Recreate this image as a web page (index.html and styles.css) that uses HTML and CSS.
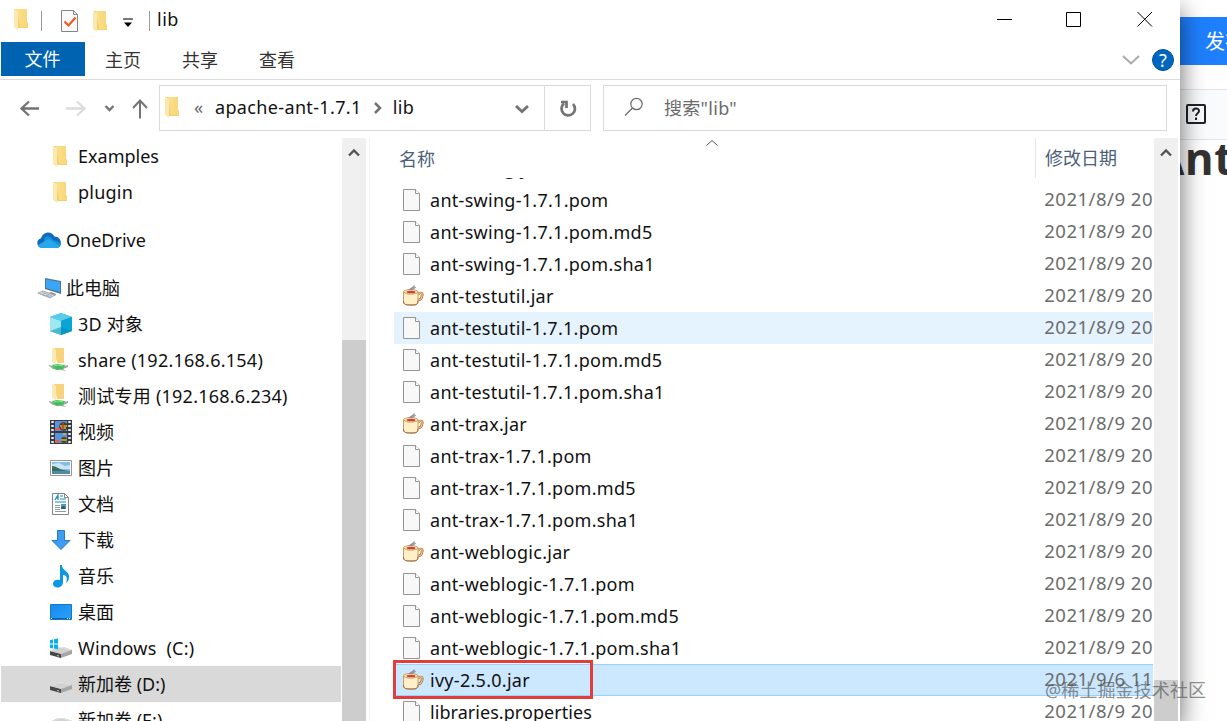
FILE: index.html
```html
<!DOCTYPE html>
<html lang="zh-CN">
<head>
    <meta charset="UTF-8">
    <meta name="viewport" content="width=device-width, initial-scale=1.0">
    <title>lib</title>
    <link rel="stylesheet" href="styles.css">
</head>
<body>
    <svg class="sprite" width="0" height="0">
        <defs>
            <linearGradient id="gold" x1="0" x2="1"><stop offset="0" stop-color="#fbe08c"/><stop offset="1" stop-color="#f8d678"/></linearGradient>
            <linearGradient id="sky" x1="0" y1="0" x2="1" y2="1"><stop offset="0" stop-color="#1689ee"/><stop offset="1" stop-color="#2ba2fb"/></linearGradient>
        </defs>
        <symbol id="folder" viewBox="0 0 24 24">
            <path d="M5 2h12v13l1 2v4H8z" fill="#f5cf68"/>
            <path d="M7 2h10v13l1 1v4h-8z" fill="url(#gold)"/>
            <path d="M4 2l4 2v19l-4-3z" fill="#fbe9b2"/>
        </symbol>
        <symbol id="file" viewBox="0 0 24 24">
            <path d="M3.500 1.500h12l4 4v17h-16z" fill="#f8f8f8" stroke="#949494"/>
            <path d="M15.500 1.500v4h4" fill="#fff" stroke="#949494"/>
        </symbol>
        <symbol id="jar" viewBox="0 0 24 24">
            <path d="M18 10c3-2 5-1 4 2-.5 3-2 4-4 4" fill="none" stroke="#a86b35" stroke-width="2.600"/>
            <path d="M18 10c3-2 5-1 4 2-.5 3-2 4-4 4" fill="none" stroke="#f7c98f" stroke-width="1.200"/>
            <path d="M3.500 8v9c0 4 3 4 7.500 4s7 0 7-4V8z" fill="#fff0c9" stroke="#cf9c5c"/>
            <path d="M3.500 17c0 4 3 4 7.500 4s7 0 7-4" fill="none" stroke="#94683d"/>
            <ellipse cx="10.700" cy="7.800" rx="7.200" ry="2.300" fill="#fbe7bd" stroke="#b58a50" stroke-width=".8"/>
            <ellipse cx="11" cy="8" rx="4.500" ry="1.300" fill="#d4452c"/>
            <path d="M9.500 6c1-3 3.500-1 5-4.500M11 6c2-2 3.500-1 4.500-3" fill="none" stroke="#858a92" stroke-width="1.200"/>
        </symbol>
        <symbol id="cloud" viewBox="0 0 24 24">
            <path d="M5 20a5 5 0 0 1-1-9.800C6 4 14 2 17.500 8.500c8 0 8.500 11.500 1 11.500z" fill="#0f6cbd"/>
            <path d="M8 9c3-2 6 0 8 3l8 3c0 4-3 5-5.500 5H5z" fill="#1490df"/>
            <path d="M1 17l11-6 11 7c-1 2-3 2-5 2H5c-2 0-3-1-4-3z" fill="#28a8ea"/>
        </symbol>
        <symbol id="pc" viewBox="0 0 24 24">
            <path d="M8 2l16 3v13L8 13z" fill="#527590"/>
            <path d="M9 3.500l14 2.500v10L9 12z" fill="#3ba5f7"/>
            <path d="M14 16l5 2-1 2-7-2z" fill="#7c8b95"/>
            <path d="M1 17l5-2 12 4-5 3z" fill="#d9dde0" stroke="#929ca3" stroke-width=".8"/>
            <path d="M3 18l11 3M5 16l10 4M5 19l4-2M9 20l4-2" stroke="#9da5aa" stroke-width=".7"/>
        </symbol>
        <symbol id="cube" viewBox="0 0 24 24">
            <path d="M12 1l11 4v14l-11 4-11-4V5z" fill="#12a5cd"/>
            <path d="M1 5l11-4 11 4-11 4z" fill="#58cce9"/>
            <path d="M1 5l11 4v14L1 19z" fill="#9ee8f2"/>
            <path d="M12 9v14l11-4V5z" fill="#08a5d5"/>
            <path d="M1 19l11-4v8zM23 19l-11-4v8z" fill="#0b8eb5" opacity=".55"/>
        </symbol>
        <symbol id="share" viewBox="0 0 24 24">
            <path d="M5 0h10v15H8z" fill="#f8d37c"/>
            <path d="M3 0l4 2v14l-4-2z" fill="#fdeab2"/>
            <path d="M0 17l4 1h11l4-1v2l-5 2 3 2-5-1-8-1-4-3z" fill="#9fa9a4"/>
            <path d="M3 17l5-1 8 1-2 4-7 1z" fill="#42bf59"/>
            <path d="M5 18l4-1 5 1" stroke="#8ce698" fill="none"/>
        </symbol>
        <symbol id="video" viewBox="0 0 24 24">
            <path d="M1 0h22v24H1z" fill="#353b43"/>
            <path d="M6 1h12v10H6zM6 13h12v10H6z" fill="#5b91dd"/>
            <circle cx="14.500" cy="6.500" r="4.300" fill="#413e25"/>
            <path d="M11 6h7M12 8h5" stroke="#d6b92e" stroke-width="1.500"/>
            <path d="M14 3v7" stroke="#c03c2d" stroke-width="1.500"/>
            <path d="M6 8h5v2H6zM6 20h4v3H6z" fill="#df6159"/>
            <circle cx="15" cy="20" r="3" fill="#484126"/>
            <path d="M12 20h6M14 14h3" stroke="#d6b92e" stroke-width="1.500"/>
            <path d="M3.500 1v22M20.500 1v22" stroke="#eee" stroke-width="2.500" stroke-dasharray="2 2"/>
        </symbol>
        <symbol id="picture" viewBox="0 0 24 24">
            <path d="M1.500 4.500h21v15h-21z" fill="#fff" stroke="#969696"/>
            <path d="M3 6h18v12H3z" fill="#83bdec"/>
            <path d="M3 8l7-1 6 3 5-1v4H3z" fill="#c7e5f7"/>
            <path d="M3 10c4 0 7 3 11 4l7 1v1H3z" fill="#39705c"/>
            <path d="M3 15h18v3H3z" fill="#518aa5"/>
        </symbol>
        <symbol id="document" viewBox="0 0 24 24">
            <path d="M3.500 1.500h12l4 4v17h-16z" fill="#fff" stroke="#858585"/>
            <path d="M15.500 1.500v4h4" fill="none" stroke="#858585"/>
            <path d="M6 8l3-5v5M7 6h2M11 4h3M11 7h6M6 10h11" fill="none" stroke="#168cc5" stroke-width="1.200"/>
            <path d="M6 13.500h5M6 15.500h5M6 17.500h5M6 19.500h11" stroke="#8c999e"/>
            <path d="M12 12h5v5h-5z" fill="#4a9ac7"/><path d="M12 15l3-1 2 3h-5z" fill="#315e64"/>
        </symbol>
        <symbol id="download" viewBox="0 0 24 24">
            <path d="M8.500 2.500h7v10H21l-9 9-9-9h5.500z" fill="#3d9df2" stroke="#287ac8"/>
        </symbol>
        <symbol id="music" viewBox="0 0 24 24">
            <path d="M11 1h2c0 6 8 6 7 13-.4 3-2 4-3 5 2-6 0-8-3-8v7c0 7-10 7-10 2 0-4 4-5 7-4z" fill="#0b98e5"/>
        </symbol>
        <symbol id="desktop" viewBox="0 0 24 24">
            <path d="M1.500 4.500h21v15h-21z" fill="url(#sky)" stroke="#147bc8"/>
            <path d="M2 18.500h20" stroke="#0864a4"/><path d="M2 18.500h1M18 18.500h1M20 18.500h1" stroke="#fff"/>
        </symbol>
        <symbol id="drive" viewBox="0 0 24 24">
            <path d="M1 14l8-4h5l9 3v4l-11 4L1 17z" fill="#a6a6a6"/>
            <path d="M1 14l11 3v4L1 18z" fill="#484848"/>
            <path d="M1 14l8-4h5l9 3-11 4z" fill="#d2d2d2"/>
            <path d="M2 14l7-3.500h5l8 2.500" fill="none" stroke="#e8e8e8" stroke-width=".8"/>
            <path d="M8 18.500l2 .5" stroke="#b8c9b5"/>
        </symbol>
        <symbol id="windrive" viewBox="0 0 24 24">
            <use href="#drive" y="1"/>
            <path d="M1 4l3-.5v4H1zM5 3.300l4-.8v5H5zM1 8.500h3v4L1 12zM5 8.500h4v4.800l-4-.8z" fill="#00b3ed"/>
        </symbol>
    </svg>

    <div class="desktop">
        <div class="explorer">
            <div class="titlebar">
                <svg class="icon"><use href="#folder"/></svg>
                <span class="sep"></span>
                <svg class="title-check" width="20" height="22" viewBox="0 0 20 22">
                    <path d="M1.500.5h12l4 4v17h-16z" fill="#fafafa" stroke="#858585"/>
                    <path d="M13.500.5v4h4" fill="none" stroke="#858585"/>
                    <path d="M4.500 11.500l4 4 7-8" fill="none" stroke="#f05a22" stroke-width="2.200"/>
                </svg>
                <svg class="icon quick-folder"><use href="#folder"/></svg>
                <svg class="title-more" width="10" height="10" viewBox="0 0 10 10"><path d="M0 1h10" stroke="#222" stroke-width="1.200"/><path d="M1 4.500h8l-4 4.500z" fill="#000"/></svg>
                <span class="sep last-sep"></span>
                <span class="title">lib</span>
                <div class="controls">
                    <svg width="16" height="16" viewBox="0 0 16 16"><path d="M0 8.500h15"/></svg>
                    <svg width="16" height="16" viewBox="0 0 16 16"><path d="M.5 1.500h14v14H.5z"/></svg>
                    <svg width="16" height="16" viewBox="0 0 16 16"><path d="M.5 1l14.500 14.500M15 1L.5 15.500"/></svg>
                </div>
            </div>

            <div class="tabs">
                <span class="tab active">文件</span>
                <span class="tab">主页</span>
                <span class="tab">共享</span>
                <span class="tab">查看</span>
                <div class="ribbon-tools">
                    <svg width="18" height="10" viewBox="0 0 18 10"><path d="M1 1l8 7.500L17 1" fill="none" stroke="#a9a9a9" stroke-width="2"/></svg>
                    <span class="help">?</span>
                </div>
            </div>

            <div class="navbar">
                <svg class="arrows" width="158" height="48" viewBox="0 0 158 48" fill="none" stroke="#737373" stroke-width="2.300">
                    <path d="M39 28.500H22M29 21.500l-7.500 7 7.500 7"/>
                    <path d="M66 28.500h18M77 21.500l7.500 7-7.500 7" stroke="#dcdcdc"/>
                    <path d="M105.500 26l4 4 4-4"/>
                    <path d="M140 38.500V21M133 28l7-7.500 7 7.500" stroke-width="2"/>
                </svg>
                <div class="address">
                    <svg class="icon"><use href="#folder"/></svg>
                    <span class="crumb-more">«</span>
                    <span class="crumb">apache-ant-1.7.1</span>
                    <svg class="crumb-arrow" width="8" height="12" viewBox="0 0 8 12"><path d="M1 1l5 5-5 5" fill="none" stroke="#737373" stroke-width="2.500"/></svg>
                    <span class="crumb">lib</span>
                    <svg class="drop" width="14" height="10" viewBox="0 0 14 10"><path d="M1 2l6 5.500L13 2" fill="none" stroke="#737373" stroke-width="2.800"/></svg>
                    <span class="refresh">
                        <svg width="20" height="20" viewBox="0 0 20 20" fill="none" stroke="#737373" stroke-width="2.700"><path d="M15 6a6.700 6.700 0 1 1-9-.5M3 4h5.500V10"/></svg>
                    </span>
                </div>
                <div class="search">
                    <svg width="20" height="20" viewBox="0 0 20 20" fill="none" stroke="#6b6b6b" stroke-width="1.200"><circle cx="12.500" cy="7" r="5.700"/><path d="M8.500 11L1 18.500"/></svg>
                    <span>搜索"lib"</span>
                </div>
            </div>

            <div class="content">
                <div class="sidebar">
                    <div class="node"><svg class="icon"><use href="#folder"/></svg>Examples</div>
                    <div class="node wide"><svg class="icon"><use href="#folder"/></svg>plugin</div>
                    <div class="node root"><svg class="icon"><use href="#cloud"/></svg>OneDrive</div>
                    <div class="node root zh"><svg class="icon"><use href="#pc"/></svg><span>此电脑</span></div>
                    <div class="node wide zh"><svg class="icon"><use href="#cube"/></svg><span>3D 对象</span></div>
                    <div class="node wide"><svg class="icon"><use href="#share"/></svg>share (192.168.6.154)</div>
                    <div class="node wide zh"><svg class="icon"><use href="#share"/></svg><span>测试专用 (192.168.6.234)</span></div>
                    <div class="node zh"><svg class="icon"><use href="#video"/></svg><span>视频</span></div>
                    <div class="node zh"><svg class="icon"><use href="#picture"/></svg><span>图片</span></div>
                    <div class="node zh"><svg class="icon"><use href="#document"/></svg><span>文档</span></div>
                    <div class="node zh"><svg class="icon"><use href="#download"/></svg><span>下载</span></div>
                    <div class="node zh"><svg class="icon"><use href="#music"/></svg><span>音乐</span></div>
                    <div class="node zh"><svg class="icon"><use href="#desktop"/></svg><span>桌面</span></div>
                    <div class="node wide"><svg class="icon"><use href="#windrive"/></svg>Windows&nbsp; (C:)</div>
                    <div class="node current zh"><svg class="icon"><use href="#drive"/></svg><span>新加卷 (D:)</span></div>
                    <div class="node zh"><svg class="icon"><use href="#drive"/></svg><span>新加卷 (E:)</span></div>
                </div>
                <div class="scrollbar side-scroll">
                    <svg width="12" height="9" viewBox="0 0 12 9"><path d="M1 7.500l5-5 5 5" fill="none" stroke="#555" stroke-width="2.400"/></svg>
                    <div class="thumb"></div>
                </div>

                <div class="files">
                    <div class="columns">
                        <span class="col-name">名称</span>
                        <svg class="sort" width="12" height="7" viewBox="0 0 12 7"><path d="M.5 6.500l5.500-5 5.500 5" fill="none" stroke="#555"/></svg>
                        <span class="col-date">修改日期</span>
                    </div>
                    <div class="rows">
                        <div class="row"><svg class="icon"><use href="#jar"/></svg><span class="name">ant-swing.jar</span><span class="date">2021/8/9 20</span></div>
                        <div class="row"><svg class="icon"><use href="#file"/></svg><span class="name">ant-swing-1.7.1.pom</span><span class="date">2021/8/9 20</span></div>
                        <div class="row"><svg class="icon"><use href="#file"/></svg><span class="name">ant-swing-1.7.1.pom.md5</span><span class="date">2021/8/9 20</span></div>
                        <div class="row"><svg class="icon"><use href="#file"/></svg><span class="name">ant-swing-1.7.1.pom.sha1</span><span class="date">2021/8/9 20</span></div>
                        <div class="row"><svg class="icon"><use href="#jar"/></svg><span class="name">ant-testutil.jar</span><span class="date">2021/8/9 20</span></div>
                        <div class="row hover"><svg class="icon"><use href="#file"/></svg><span class="name">ant-testutil-1.7.1.pom</span><span class="date">2021/8/9 20</span></div>
                        <div class="row"><svg class="icon"><use href="#file"/></svg><span class="name">ant-testutil-1.7.1.pom.md5</span><span class="date">2021/8/9 20</span></div>
                        <div class="row"><svg class="icon"><use href="#file"/></svg><span class="name">ant-testutil-1.7.1.pom.sha1</span><span class="date">2021/8/9 20</span></div>
                        <div class="row"><svg class="icon"><use href="#jar"/></svg><span class="name">ant-trax.jar</span><span class="date">2021/8/9 20</span></div>
                        <div class="row"><svg class="icon"><use href="#file"/></svg><span class="name">ant-trax-1.7.1.pom</span><span class="date">2021/8/9 20</span></div>
                        <div class="row"><svg class="icon"><use href="#file"/></svg><span class="name">ant-trax-1.7.1.pom.md5</span><span class="date">2021/8/9 20</span></div>
                        <div class="row"><svg class="icon"><use href="#file"/></svg><span class="name">ant-trax-1.7.1.pom.sha1</span><span class="date">2021/8/9 20</span></div>
                        <div class="row"><svg class="icon"><use href="#jar"/></svg><span class="name">ant-weblogic.jar</span><span class="date">2021/8/9 20</span></div>
                        <div class="row"><svg class="icon"><use href="#file"/></svg><span class="name">ant-weblogic-1.7.1.pom</span><span class="date">2021/8/9 20</span></div>
                        <div class="row"><svg class="icon"><use href="#file"/></svg><span class="name">ant-weblogic-1.7.1.pom.md5</span><span class="date">2021/8/9 20</span></div>
                        <div class="row"><svg class="icon"><use href="#file"/></svg><span class="name">ant-weblogic-1.7.1.pom.sha1</span><span class="date">2021/8/9 20</span></div>
                        <div class="row selected"><svg class="icon"><use href="#jar"/></svg><span class="name">ivy-2.5.0.jar</span><span class="date">2021/9/6 11</span><div class="mark"></div></div>
                        <div class="row"><svg class="icon"><use href="#file"/></svg><span class="name plain">libraries.properties</span><span class="date">2021/8/9 20</span></div>
                    </div>
                </div>
                <div class="scrollbar file-scroll">
                    <svg width="12" height="9" viewBox="0 0 12 9"><path d="M1 7.500l5-5 5 5" fill="none" stroke="#555" stroke-width="2.400"/></svg>
                    <div class="thumb"></div>
                </div>
            </div>
        </div>

        <div class="page">
            <div class="publish">发布</div>
            <div class="toolbar">
                <svg width="20" height="20" viewBox="0 0 20 20" fill="none" stroke="#1d2129" stroke-width="2"><rect x="1" y="1" width="18" height="18" rx="1"/><path d="M7 7.500c0-4 6-4 6-.5 0 2.500-3 2-3 5M10 13.500V16"/></svg>
            </div>
            <div class="heading">Ant</div>
        </div>
        <div class="watermark">@稀土掘金技术社区</div>
    </div>
</body>
</html>
```
FILE: styles.css
```css
* {
    box-sizing: border-box;
}

body {
    margin: 0;
    font-family: "Noto Sans", "Noto Sans CJK SC", sans-serif;
    font-size: 18px;
    color: #111;
    background-color: white;
    overflow: hidden;
}

svg {
    display: block;
    flex-shrink: 0;
}

.sprite {
    position: absolute;
}

.icon {
    width: 24px;
    height: 24px;
}

.desktop {
    position: relative;
    display: flex;
    width: 1227px;
    height: 721px;
    overflow: hidden;
}

.explorer {
    position: relative;
    z-index: 1;
    display: flex;
    flex-direction: column;
    width: 1180px;
    flex-shrink: 0;
    background-color: white;
    box-shadow: 0 10px 24px rgba(0, 0, 0, 0.6);
}

/* title bar */
.titlebar {
    display: flex;
    align-items: center;
    height: 42px;
    padding: 0 27px 5px 10px;
}

.sep {
    width: 1px;
    height: 20px;
    margin: 4px 0 0 7px;
    background-color: #9a9a9a;
}

.title-check {
    margin: 5px 0 0 18px;
}

.quick-folder {
    margin: 4px 0 0 9px;
}

.title-more {
    margin: 9px 0 0 10px;
}

.last-sep {
    margin-left: 16px;
}

.title {
    margin-left: 7px;
    letter-spacing: 0.5px;
}

.controls {
    display: flex;
    gap: 54px;
    margin-left: auto;
}

.controls svg {
    fill: none;
    stroke: #000;
    stroke-width: 1;
}

.controls svg:nth-child(2) {
    margin: 0 1px 0 -1px;
}

.tabs {
    display: flex;
    height: 38px;
    padding-left: 1px;
    border-bottom: 1px solid #dadbdc;
}

.tab {
    width: 77px;
    padding-right: 1px;
    line-height: 36px;
    text-align: center;
    color: #333;
}

.tab.active {
    width: 84px;
    height: 34px;
    line-height: 34px;
    color: white;
    background-color: #0063b1;
}

.ribbon-tools {
    display: flex;
    align-items: center;
    gap: 12px;
    margin-left: auto;
    padding: 0 6px 2px 0;
}

.help {
    width: 22px;
    height: 22px;
    border-radius: 50%;
    background-color: #0067c0;
    border: 1px solid #004f9b;
    color: white;
    font-size: 18px;
    line-height: 20px;
    text-align: center;
}

/* address and search */
.navbar {
    display: flex;
    height: 58px;
    padding-top: 5px;
}

.arrows {
    margin: -5px 1px 0 0;
}

.address {
    display: flex;
    align-items: center;
    width: 432px;
    height: 46px;
    padding-left: 1px;
    border: 1px solid #d9d9d9;
}

.address .icon {
    margin-bottom: 2px;
}

.crumb {
    margin-bottom: 2px;
    letter-spacing: 0.35px;
}

.crumb-more {
    width: 30px;
    padding: 0 0 3px 9px;
    color: #666;
}

.crumb-arrow {
    margin: 0 11px 0 12px;
}

.drop {
    margin: 2px 15px 0 auto;
}

.refresh {
    display: flex;
    align-items: center;
    justify-content: center;
    width: 46px;
    height: 100%;
    border-left: 1px solid #d9d9d9;
}

.search {
    display: flex;
    align-items: center;
    width: 564px;
    height: 46px;
    margin-left: 12px;
    padding: 0 0 2px 20px;
    gap: 20px;
    border: 1px solid #d9d9d9;
    color: #6b6b6b;
    letter-spacing: 0.3px;
}

.content {
    display: flex;
    height: 583px;
}

/* navigation tree */
.sidebar {
    width: 342px;
    height: 583px;
    padding-left: 1px;
    overflow: hidden;
}

.node {
    display: flex;
    align-items: center;
    width: 340px;
    height: 36px;
    padding-left: 48px;
    gap: 5px;
    white-space: nowrap;
}

.node.root {
    margin-top: 12px;
    padding-left: 36px;
}

.node.wide {
    letter-spacing: 0.24px;
}

.node.zh span {
    margin-bottom: 2px;
}

.node.current {
    background-color: #d9d9d9;
}

.scrollbar {
    display: flex;
    flex-direction: column;
    align-items: center;
    width: 24px;
    height: 583px;
    padding-top: 10px;
    background-color: #f0f0f0;
}

.thumb {
    width: 24px;
    flex: 1;
    background-color: #cdcdcd;
}

.side-scroll .thumb {
    margin-top: 183px;
}

.file-scroll .thumb {
    margin-top: 523px;
}

/* file list */
.files {
    width: 785px;
    margin-left: 3px;
    padding-left: 24px;
    border-left: 1px solid #f3f3f3;
}

.columns {
    position: relative;
    display: flex;
    align-items: center;
    height: 40px;
    color: #4c607a;
}

.col-name {
    width: 641px;
    padding: 0 0 1px 5px;
}

/* sort arrow sits over the column header */
.sort {
    position: absolute;
    left: 312px;
    top: 1px;
}

.col-date {
    height: 40px;
    padding-left: 9px;
    line-height: 40px;
    border-left: 1px solid #e5e5e5;
}

.rows {
    height: 543px;
    margin-left: -1px;
    padding-left: 1px;
    overflow: hidden;
}

.row {
    position: relative;
    display: flex;
    align-items: center;
    width: 759px;
    height: 32px;
    padding-left: 6px;
    white-space: nowrap;
}

/* scrolled almost out of view under the header */
.row:first-child {
    margin-top: -26px;
}

.row:first-child .icon,
.row:first-child .date {
    margin-bottom: 6px;
}

.row .name {
    width: 616px;
    margin-left: 6px;
    letter-spacing: 0.28px;
}

.row .name.plain {
    letter-spacing: 0.05px;
}

.row .date {
    color: #6d6d6d;
    font-size: 18.5px;
    line-height: 24px;
    margin-bottom: 2px;
    letter-spacing: 0.5px;
}

.row.hover {
    background-color: #e5f3ff;
}

.row.selected {
    background-color: #cce8ff;
    box-shadow: inset 0 1px 0 #99d1ff, inset 0 -1px 0 #99d1ff;
}

/* red frame around the jar */
.mark {
    position: absolute;
    left: -1px;
    top: -4px;
    width: 200px;
    height: 39px;
    border: 3px solid #e23d3d;
    z-index: 1;
}

/* web page behind the window */
.page {
    width: 47px;
    padding-top: 17px;
}

.publish {
    width: 80px;
    height: 48px;
    padding-left: 25px;
    color: white;
    font-size: 20px;
    line-height: 50px;
    background-color: #1e80ff;
}

.toolbar {
    height: 51px;
    margin-top: 24px;
    padding: 14px 0 0 6px;
    background-color: #fafbfc;
    border-top: 1px solid #e1e4e8;
    border-bottom: 1px solid #e1e4e8;
}

.heading {
    margin: -4px 0 0 -26px;
    font-family: "Open Sans", sans-serif;
    font-size: 44px;
    font-weight: bold;
    line-height: 44px;
    letter-spacing: 0.5px;
    color: #333;
}

.watermark {
    position: absolute;
    z-index: 2;
    left: 1045px;
    top: 678px;
    font-size: 18px;
    line-height: 24px;
    letter-spacing: 0.1px;
    color: rgba(80, 80, 80, 0.65);
    white-space: nowrap;
}
```
